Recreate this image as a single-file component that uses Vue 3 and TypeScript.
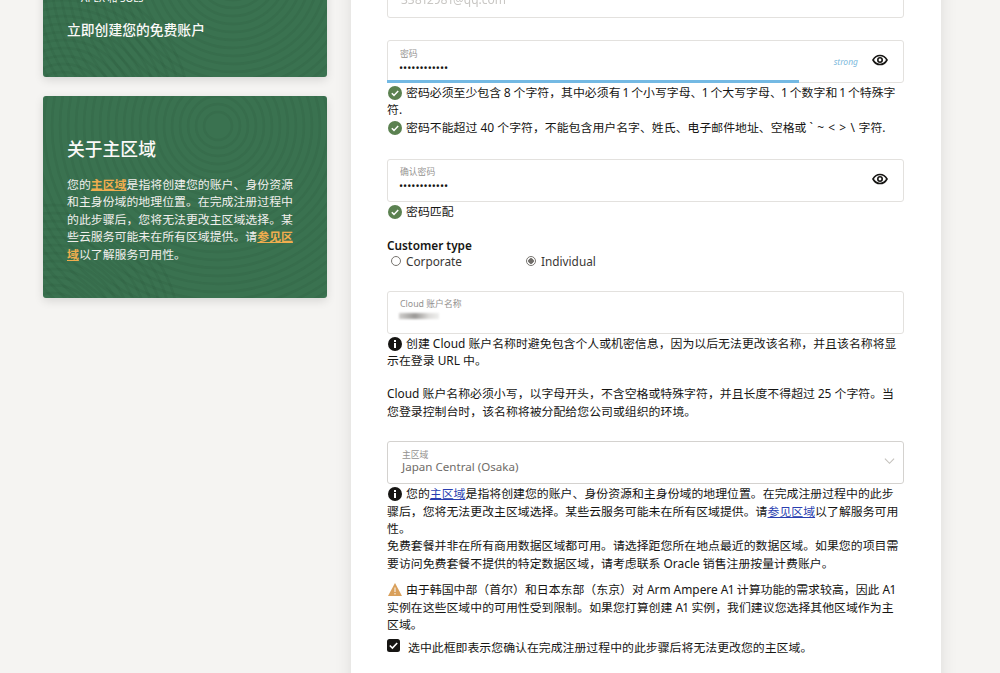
<script setup lang="ts">
const regionLink = '主区域'
const radii = (from: number, to: number, step: number): number[] => {
  const out: number[] = []
  for (let r = from; r <= to; r += step) out.push(r)
  return out
}
const ringsA = radii(14, 260, 8)
const ringsB = radii(30, 130, 8)
</script>

<template>
  <div class="viewport">
    <div class="page">
      <aside class="side">
        <section class="promo first">
          <svg class="rings" viewBox="0 0 284 137" preserveAspectRatio="none">
            <circle v-for="r in ringsA" :key="r" cx="190" cy="30" :r="r" />
            <circle v-for="r in ringsB" :key="'b' + r" cx="20" cy="170" :r="r" />
          </svg>
          <p class="clip">APEX 和 SOLs</p>
          <p class="cta">立即创建您的免费账户</p>
        </section>
        <section class="promo second">
          <svg class="rings" viewBox="0 0 284 202" preserveAspectRatio="none">
            <circle v-for="r in ringsA" :key="r" cx="175" cy="30" :r="r" />
            <circle v-for="r in ringsB" :key="'b' + r" cx="10" cy="235" :r="r" />
          </svg>
          <h2>关于主区域</h2>
          <p class="about">您的<a>{{ regionLink }}</a>是指将创建您的账户、身份资源和主身份域的地理位置。在完成注册过程中的此步骤后，您将无法更改主区域选择。某些云服务可能未在所有区域提供。请<a>参见区域</a>以了解服务可用性。</p>
        </section>
      </aside>

      <main class="card">
        <div class="field email"><span class="blurred-mail">33812981@qq.com</span></div>

        <div class="field pw">
          <label>密码</label>
          <span class="dots">••••••••••••</span>
          <em class="strong">strong</em>
          <svg class="eye" viewBox="0 0 24 24"><path d="M1.5 12C4 7.5 7.6 5.2 12 5.2s8 2.3 10.5 6.8C20 16.5 16.4 18.800 12 18.800S4 16.500 1.500 12Z" fill="none" stroke="#161513" stroke-width="2.400"/><circle cx="12" cy="12" r="3.300" fill="none" stroke="#161513" stroke-width="2.400"/></svg>
          <i class="meter"></i>
        </div>
        <p class="hint h-a tight"><svg class="ico" viewBox="0 0 14 14"><circle cx="7" cy="7" r="7" fill="#5b8150"/><path d="M3.800 7.200l2.200 2.200 4.200-4.400" fill="none" stroke="#fff" stroke-width="1.500"/></svg>密码必须至少包含 8 个字符，其中必须有 1 个小写字母、1 个大写字母、1 个数字和 1 个特殊字符.</p>
        <p class="hint second-rule"><svg class="ico" viewBox="0 0 14 14"><circle cx="7" cy="7" r="7" fill="#5b8150"/><path d="M3.800 7.200l2.200 2.200 4.200-4.400" fill="none" stroke="#fff" stroke-width="1.500"/></svg>密码不能超过 40 个字符，不能包含用户名字、姓氏、电子邮件地址、空格或 <span class="sym">` ~ &lt; &gt; \</span> 字符.</p>

        <div class="field confirm">
          <label>确认密码</label>
          <span class="dots">••••••••••••</span>
          <svg class="eye" viewBox="0 0 24 24"><path d="M1.5 12C4 7.5 7.6 5.2 12 5.2s8 2.3 10.5 6.8C20 16.5 16.4 18.800 12 18.800S4 16.500 1.500 12Z" fill="none" stroke="#161513" stroke-width="2.400"/><circle cx="12" cy="12" r="3.300" fill="none" stroke="#161513" stroke-width="2.400"/></svg>
        </div>
        <p class="hint h-a"><svg class="ico" viewBox="0 0 14 14"><circle cx="7" cy="7" r="7" fill="#5b8150"/><path d="M3.800 7.200l2.200 2.200 4.200-4.400" fill="none" stroke="#fff" stroke-width="1.500"/></svg>密码匹配</p>

        <h3>Customer type</h3>
        <div class="radios">
          <span class="radio r1"><i></i>Corporate</span>
          <span class="radio on"><i></i>Individual</span>
        </div>

        <div class="field account">
          <label>Cloud 账户名称</label>
          <span class="smear"></span>
        </div>
        <p class="hint h-a"><svg class="ico" viewBox="0 0 14 14"><circle cx="7" cy="7" r="7" fill="#161513"/><rect x="6" y="6" width="2" height="5" fill="#fff"/><rect x="6" y="3" width="2" height="2" fill="#fff"/></svg>创建 Cloud 账户名称时避免包含个人或机密信息，因为以后无法更改该名称，并且该名称将显示在登录 URL 中。</p>
        <p class="hint para">Cloud 账户名称必须小写，以字母开头，不含空格或特殊字符，并且长度不得超过 25 个字符。当您登录控制台时，该名称将被分配给您公司或组织的环境。</p>

        <div class="field region">
          <label>主区域</label>
          <span class="value">Japan Central (Osaka)</span>
          <svg class="chev" viewBox="0 0 12 8"><path d="M1 1.500l5 5 5-5" fill="none" stroke="#c4c1bc" stroke-width="1.200"/></svg>
        </div>
        <p class="hint region-note"><svg class="ico" viewBox="0 0 14 14"><circle cx="7" cy="7" r="7" fill="#161513"/><rect x="6" y="6" width="2" height="5" fill="#fff"/><rect x="6" y="3" width="2" height="2" fill="#fff"/></svg>您的<a class="blue">主区域</a>是指将创建您的账户、身份资源和主身份域的地理位置。在完成注册过程中的此步骤后，您将无法更改主区域选择。某些云服务可能未在所有区域提供。请<a class="blue">参见区域</a>以了解服务可用性。</p>
        <p class="hint">免费套餐并非在所有商用数据区域都可用。请选择距您所在地点最近的数据区域。如果您的项目需要访问免费套餐不提供的特定数据区域，请考虑联系 Oracle 销售注册按量计费账户。</p>
        <p class="hint warn"><svg class="ico tri" viewBox="0 0 14 13"><path d="M7 0l7 13H0Z" fill="#d9a05b"/><rect x="6.300" y="4.500" width="1.400" height="4.500" fill="#fff" opacity=".7"/><rect x="6.300" y="10" width="1.400" height="1.400" fill="#fff" opacity=".7"/></svg>由于韩国中部（首尔）和日本东部（东京）对 Arm Ampere A1 计算功能的需求较高，因此 A1 实例在这些区域中的可用性受到限制。如果您打算创建 A1 实例，我们建议您选择其他区域作为主区域。</p>
        <div class="ack">
          <svg class="box" viewBox="0 0 13 13"><rect width="13" height="13" rx="2.500" fill="#161513"/><path d="M2.800 6.500l2.600 2.500 4.800-5" fill="none" stroke="#fff" stroke-width="1.600"/></svg>
          <span>选中此框即表示您确认在完成注册过程中的此步骤后将无法更改您的主区域。</span>
        </div>
      </main>
    </div>
  </div>
</template>

<style>
html, body { margin: 0; background: #f5f4f2; }
</style>

<style scoped>
.viewport {
  height: 673px;
  overflow: hidden;
  font-family: "Noto Sans", "Noto Sans CJK SC", sans-serif;
  font-size: 11.900px;
  line-height: 17.400px;
  font-variant-numeric: proportional-nums;
  color: #161513;
}
.page {
  display: grid;
  grid-template-columns: 284px 590px;
  column-gap: 24px;
  padding-left: 43px;
  margin-top: -60px;
  align-items: start;
}
p, h2, h3 { margin: 0; }
.side { display: flex; flex-direction: column; gap: 19px; }
.promo {
  position: relative;
  overflow: hidden;
  box-sizing: border-box;
  padding: 0 24px;
  border-radius: 3px;
  color: #fbf9f8;
  box-shadow: 0 3px 10px rgba(0, 0, 0, .12);
  background-color: #3a7250;
}
.rings {
  position: absolute;
  inset: 0;
  width: 100%;
  height: 100%;
  fill: none;
  stroke: rgba(20, 60, 40, .085);
  stroke-width: 2.500;
}
.promo > p, .promo > h2 { position: relative; }
.first { height: 137px; padding-top: 51px; }
.clip { font-size: 10px; line-height: 14px; padding-left: 14px; }
.cta { font-size: 13.800px; font-weight: 500; line-height: 20px; margin-top: 15px; }
.second { height: 202px; padding-top: 41px; }
.second h2 { font-size: 17.800px; font-weight: 500; line-height: 24px; }
.about { margin-top: 15px; color: #f1efed; }
.about a { color: #f0ad4e; font-weight: 600; text-decoration: underline; }

.card {
  box-sizing: border-box;
  background: #fff;
  padding: 0 37px 60px 36px;
  box-shadow: 0 0 16px rgba(0, 0, 0, .10);
  min-height: 760px;
}
.field {
  position: relative;
  box-sizing: border-box;
  height: 43px;
  border: 1px solid #e3e1de;
  border-radius: 3px;
  background: #fff;
}
.field label {
  position: absolute;
  left: 12px;
  top: 6px;
  font-size: 8.800px;
  line-height: 12px;
  color: #949290;
}
.pw label { top: 7px; }
.email { margin-top: 35px; }
.blurred-mail {
  position: absolute;
  left: 13px;
  top: 15px;
  font-size: 12px;
  color: #c9c7c4;
  filter: blur(.5px);
}
.pw { margin-top: 22px; }
.dots {
  position: absolute;
  left: 11px;
  top: 17px;
  font-size: 10.900px;
  color: #161513;
}
.pw .dots { top: 18px; }
.strong {
  position: absolute;
  right: 45px;
  top: 12px;
  font-size: 8.500px;
  color: #7db9dc;
}
.eye { position: absolute; right: 15px; top: 11px; width: 16px; height: 16px; }
.meter {
  position: absolute;
  left: -1px;
  bottom: -1px;
  width: 80%;
  height: 3px;
  background: #74b9e3;
}
.hint { margin: 0; }
.tight { word-spacing: -.4px; }
.h-a { margin-top: 1px; }
.second-rule { margin-top: 0; }
.sym { letter-spacing: .6px; }
.ico { width: 14px; height: 14px; margin: 0 4px 0 1px; vertical-align: -3px; }
.tri { width: 14px; height: 13px; vertical-align: -2px; }
.confirm { margin-top: 23px; }
h3 { font-size: 11.800px; font-weight: 600; margin-top: 16px; line-height: 16px; }
.radios { display: flex; line-height: 16px; font-size: 11.800px; }
.radio { display: inline-flex; align-items: center; gap: 5px; color: #3a3835; }
.r1 { width: 139px; padding-left: 4px; box-sizing: border-box; }
.radio i {
  box-sizing: border-box;
  width: 10px;
  height: 10px;
  border: 1px solid #77746f;
  border-radius: 50%;
  background: #fff;
}
.radio.on i { background: radial-gradient(circle, #706d69 0 2.500px, #fff 3px); }
.account { margin-top: 22px; }
.smear {
  position: absolute;
  left: 11px;
  top: 21px;
  width: 40px;
  height: 6px;
  background: linear-gradient(90deg, #d0cfcd, #9a9896 40%, #dddcda 75%, #eeeeed);
  filter: blur(1.300px);
}
.para { margin-top: 16px; }
.region { margin-top: 21px; border-color: #d4d2cf; }
.region label { left: 14px; top: 7px; }
.region-note { margin-top: 1px; }
.value { position: absolute; left: 14px; top: 16px; font-size: 11.600px; color: #6f6c68; }
.chev { position: absolute; right: 8px; top: 15px; width: 11px; height: 8px; }
.blue { color: #2a3fb0; text-decoration: underline; }
.warn { margin-top: 9px; }
.ack { display: flex; gap: 8px; margin-top: 5px; align-items: flex-start; }
.box { width: 13px; height: 13px; flex: none; }
</style>
